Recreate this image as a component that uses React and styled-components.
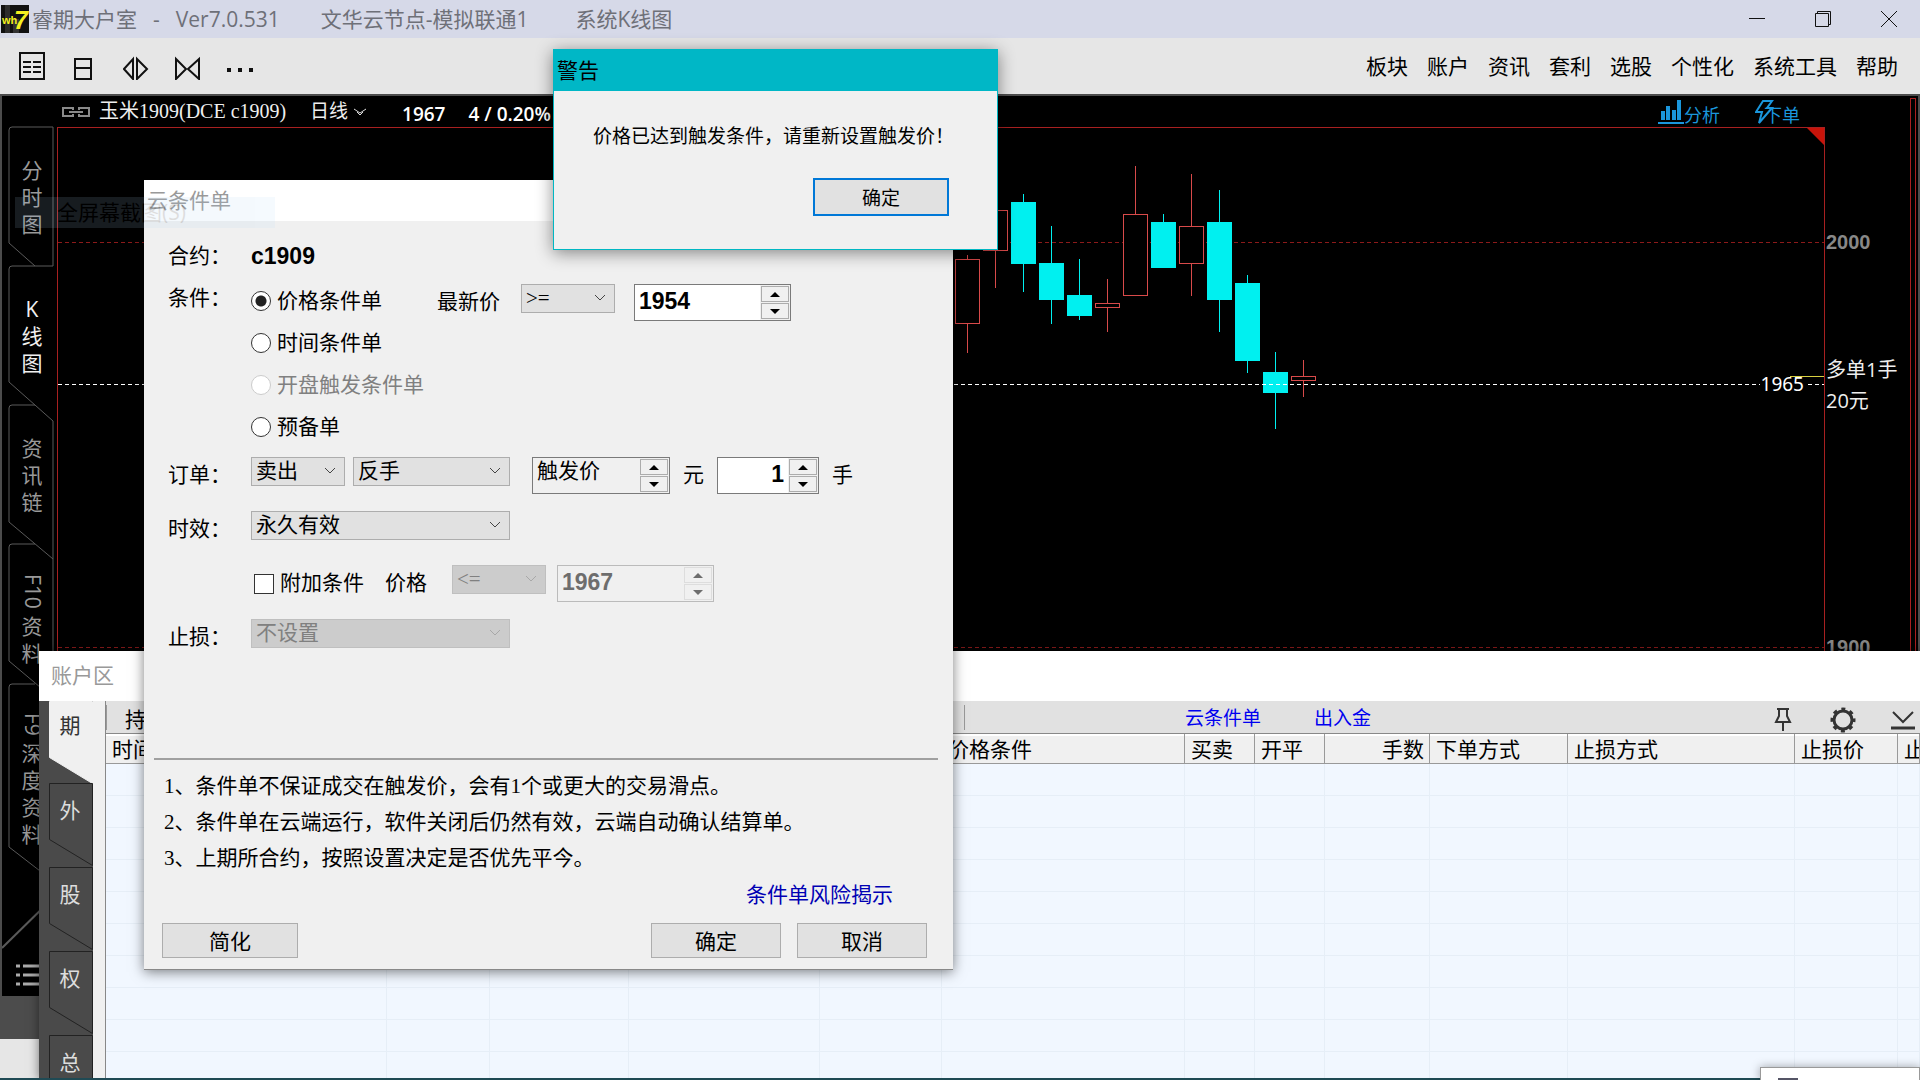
import React from 'react';
import styled, { createGlobalStyle } from 'styled-components';

const SANS = `'Open Sans', 'Noto Sans CJK SC', sans-serif`;
const SONG = `'Liberation Serif', 'Noto Sans CJK SC', serif`;
const ARIAL = `'Liberation Sans', 'Noto Sans CJK SC', sans-serif`;

const MENU = ['板块', '账户', '资讯', '套利', '选股', '个性化', '系统工具', '帮助'];

const SIDE_TABS = [
  { chars: ['分', '时', '图'] },
  { chars: ['K', '线', '图'], active: true },
  { chars: ['资', '讯', '链'] },
  { latin: 'F10', chars: ['资', '料'] },
  { latin: 'F9', chars: ['深', '度', '资', '料'] },
];

const ACCOUNT_TABS = ['期', '外', '股', '权', '总'];

const COLUMNS = [
  { width: 281, title: '时间' },
  { width: 103 },
  { width: 139 },
  { width: 191 },
  { width: 122 },
  { width: 243, title: '价格条件' },
  { width: 70, title: '买卖' },
  { width: 70, title: '开平' },
  { width: 105, title: '手数', right: true },
  { width: 138, title: '下单方式' },
  { width: 227, title: '止损方式' },
  { width: 103, title: '止损价' },
  { title: '止损' },
];

// x is the middle of the candle, y values run from the top of the plot
const CANDLES = [
  { x: 909, high: 127, top: 131, bottom: 195, low: 225, up: true },
  { x: 937, high: 70, top: 82, bottom: 122, low: 160, up: true },
  { x: 965, high: 66, top: 74, bottom: 135, low: 164 },
  { x: 993, high: 98, top: 135, bottom: 171, low: 196 },
  { x: 1021, high: 131, top: 167, bottom: 187, low: 192 },
  { x: 1049, high: 151, top: 175, bottom: 179, low: 204, up: true },
  { x: 1077, high: 38, top: 86, bottom: 167, low: 167, up: true },
  { x: 1105, high: 86, top: 94, bottom: 139, low: 139 },
  { x: 1133, high: 46, top: 98, bottom: 135, low: 168, up: true },
  { x: 1161, high: 62, top: 94, bottom: 171, low: 204 },
  { x: 1189, high: 147, top: 155, bottom: 232, low: 245 },
  { x: 1217, high: 224, top: 244, bottom: 264, low: 301 },
  { x: 1245, high: 232, top: 248, bottom: 252, low: 269, up: true },
];

function ComboBox({ label, value, width, disabled }) {
  return (
    <ComboWrap $width={width}>
      <Combo aria-label={label} disabled={disabled} defaultValue={value}>
        <option>{value}</option>
      </Combo>
      <ComboArrow viewBox="0 0 12 8" $disabled={disabled}>
        <path d="M1 1l5 5 5-5" />
      </ComboArrow>
    </ComboWrap>
  );
}

function Spinner({ label, value, width, disabled, plain, right }) {
  return (
    <SpinnerBox $width={width} $disabled={disabled} $plain={plain}>
      <SpinnerInput
        aria-label={label}
        defaultValue={value}
        disabled={disabled}
        $plain={plain}
        $right={right}
      />
      <SpinnerButtons>
        <SpinnerButton type="button" aria-label={`${label} +`} disabled={disabled}>
          <svg width="10" height="5"><path d="M0 5l5-5 5 5z" fill="currentColor" /></svg>
        </SpinnerButton>
        <SpinnerButton type="button" aria-label={`${label} -`} disabled={disabled}>
          <svg width="10" height="5"><path d="M0 0l5 5 5-5z" fill="currentColor" /></svg>
        </SpinnerButton>
      </SpinnerButtons>
    </SpinnerBox>
  );
}

function TitleBar() {
  return (
    <TitleBarBox>
      <svg width="28" height="28" viewBox="0 0 28 28">
        <rect width="28" height="28" fill="#111" />
        <rect x="4" width="5" height="28" fill="#2c2c2c" />
        <rect x="12" y="14" width="6" height="14" fill="#333" />
        <text x="1" y="19" fill="#f4f020" fontFamily="Liberation Sans" fontWeight="bold" fontSize="11">wh</text>
        <text x="13" y="24" fill="#f4f020" fontFamily="Liberation Sans" fontStyle="italic" fontWeight="bold" fontSize="25">7</text>
      </svg>
      <AppName>
        <span>睿期大户室</span>
        <span>-</span>
        <span>Ver7.0.531</span>
      </AppName>
      <span>文华云节点-模拟联通1</span>
      <ViewName>系统K线图</ViewName>
      <WindowButtons>
        <WindowButton aria-label="最小化">
          <svg width="16" height="16"><path d="M0 7.5h16" /></svg>
        </WindowButton>
        <WindowButton aria-label="还原">
          <svg width="16" height="16"><path d="M.5 2.500h13v13h-13zM2.500 2.500v-2h13v13h-2" /></svg>
        </WindowButton>
        <WindowButton aria-label="关闭">
          <svg width="16" height="16"><path d="M0 0l16 16M16 0L0 16" /></svg>
        </WindowButton>
      </WindowButtons>
    </TitleBarBox>
  );
}

function Toolbar() {
  return (
    <ToolbarBox>
      <Tools>
        <ToolButton aria-label="列表">
          <svg width="26" height="28">
            <path d="M1 1h24v26H1zM4 10h8M14 10h8M4 15h8M14 15h8M4 20h8M14 20h8" />
          </svg>
        </ToolButton>
        <ToolButton aria-label="日线">
          <svg width="26" height="28"><path d="M4 7h16v20H4zM4 16h16" /></svg>
        </ToolButton>
        <ToolButton aria-label="缩小">
          <svg width="26" height="28"><path d="M10 7v20L1 17zM14 7v20l10-10z" /></svg>
        </ToolButton>
        <ToolButton aria-label="放大">
          <svg width="26" height="28"><path d="M1 7v20l10-10zM24 7v20L13 17z" /></svg>
        </ToolButton>
        <ToolButton aria-label="更多">
          <svg width="26" height="28">
            <path d="M0 18h4M11 18h4M22 18h4" />
          </svg>
        </ToolButton>
      </Tools>
      <Menu>
        {MENU.map((item) => (
          <MenuItem key={item}>{item}</MenuItem>
        ))}
      </Menu>
    </ToolbarBox>
  );
}

function SideBar() {
  return (
    <SideBarBox>
      <SideOutline width="55" height="900">
        <path d="M33 170h18V31H10q-3 0-3 3v113l26 23H10q-3 0-3 3v113l44 39v138M33 309H10q-3 0-3 3v114l44 37v128M33 448H10q-3 0-3 3v114l44 37v300M33 588H10q-3 0-3 3v160l44 34" />
        <path d="M0 852L55 798" strokeWidth="2" />
        <path d="M14 870h4M14 879h4M14 888h4M21 870h22M21 879h22M21 888h22" strokeWidth="3" stroke="#aaa" />
      </SideOutline>
      {SIDE_TABS.map((tab, i) => (
        <SideTab key={i} $active={tab.active}>
          {tab.latin && <Sideways>{tab.latin}</Sideways>}
          {tab.chars.map((c, n) => (
            <span key={n}>{c}</span>
          ))}
        </SideTab>
      ))}
    </SideBarBox>
  );
}

function Chart() {
  return (
    <Plot>
      <svg width="100%" height="100%">
        <line x1="0" x2="100%" y1="114.5" y2="114.5" stroke="#8c1a1a" strokeDasharray="4 3" />
        <line x1="0" x2="100%" y1="519.5" y2="519.5" stroke="#8c1a1a" strokeDasharray="4 3" />
        {CANDLES.map((c) => {
          const color = c.up ? '#d84a4a' : '#00f0f0';
          return (
            <g key={c.x} stroke={color} shapeRendering="crispEdges">
              <line x1={c.x} x2={c.x} y1={c.high} y2={c.top} />
              <line x1={c.x} x2={c.x} y1={c.bottom} y2={c.low} />
              <rect
                x={c.x - 12}
                y={c.top}
                width="24"
                height={c.bottom - c.top}
                fill={c.up ? '#000' : color}
              />
            </g>
          );
        })}
        <line x1="0" x2="100%" y1="256.500" y2="256.500" stroke="#fff" strokeDasharray="4 3" />
      </svg>
      <Corner width="17" height="17"><path d="M0 0h17v17z" fill="#c8140a" /></Corner>
      <LastPrice>1965</LastPrice>
      <CostLine />
    </Plot>
  );
}

function ChartPanel() {
  return (
    <ChartColumn>
      <ChartHeader>
        <svg width="28" height="12" fill="none" stroke="#8a8a8a" strokeWidth="2">
          <path d="M11 4V2H1v8h10V8M17 4V2h10v8H17V8M7 6h14" />
        </svg>
        <Contract>玉米1909(DCE c1909)</Contract>
        <Period>
          日线
          <svg width="13" height="8" fill="none" stroke="#ddd"><path d="M0 1l6 4 6-4M3 4l3 3 3-3" /></svg>
        </Period>
        <Quote>1967</Quote>
        <Quote>4 / 0.20%</Quote>
        <Actions>
          <ActionButton>
            <svg width="26" height="24" fill="currentColor">
              <path d="M3 11h4v9H3zM8 6h4v14H8zM14 10h4v10h-4zM19 0h4v20h-4zM0 22h26v2H0z" />
            </svg>
            <span>分析</span>
          </ActionButton>
          <ActionButton $overlap>
            <svg width="19" height="24" fill="none" stroke="currentColor" strokeWidth="2">
              <path d="M8 1h9l-5 7h5L4 23l3-11H1z" />
            </svg>
            <span>下单</span>
          </ActionButton>
        </Actions>
      </ChartHeader>
      <ChartRow>
        <Chart />
        <Axis>
          <AxisLabel $top={102}>2000</AxisLabel>
          <AxisLabel $top={507}>1900</AxisLabel>
          <Position>多单1手<br />20元</Position>
        </Axis>
      </ChartRow>
    </ChartColumn>
  );
}

function AccountWindow() {
  return (
    <AccountBox>
      <WindowTitle $tall>账户区</WindowTitle>
      <AccountBody>
        <AccountRail>
          {ACCOUNT_TABS.map((name, i) => (
            <AccountTab key={name} $active={i === 0}>
              <svg width="44" height="84"><path d="M.5 .5h43v82l-43-26z" /></svg>
              <span>{name}</span>
            </AccountTab>
          ))}
        </AccountRail>
        <AccountMain>
          <AccountBar>
            <AccountViews>
              <AccountView>持仓</AccountView>
            </AccountViews>
            <AccountLinks>
              <a href="#cloud">云条件单</a>
              <a href="#funds">出入金</a>
            </AccountLinks>
            <IconButtons>
              <IconButton aria-label="固定">
                <svg width="26" height="26" strokeWidth="2">
                  <path d="M7 2h12M9 2v7l-3 6h14l-3-6V2M13 15v9" />
                </svg>
              </IconButton>
              <IconButton aria-label="设置">
                <svg width="26" height="26">
                  <circle cx="13" cy="13" r="11" strokeWidth="3" strokeDasharray="4 4.640" strokeDashoffset="2" />
                  <circle cx="13" cy="13" r="9" strokeWidth="3" />
                </svg>
              </IconButton>
              <IconButton aria-label="收起">
                <svg width="26" height="26" strokeWidth="2">
                  <path d="M3 5l10 10L23 5" />
                  <path d="M1 21h24" strokeWidth="3" />
                </svg>
              </IconButton>
            </IconButtons>
          </AccountBar>
          <OrderTable>
            <colgroup>
              {COLUMNS.map((c, i) => (
                <col key={i} width={c.width} />
              ))}
            </colgroup>
            <thead>
              <tr>
                {COLUMNS.map((c, i) => (
                  <HeadCell key={i} $right={c.right}>{c.title}</HeadCell>
                ))}
              </tr>
            </thead>
            <tbody>
              {Array.from({ length: 10 }, (_, r) => (
                <tr key={r}>
                  {COLUMNS.map((c, i) => (
                    <Cell key={i} />
                  ))}
                </tr>
              ))}
            </tbody>
          </OrderTable>
        </AccountMain>
      </AccountBody>
    </AccountBox>
  );
}

function ConditionDialog() {
  return (
    <DialogBox>
      <WindowTitle>云条件单</WindowTitle>
      <DialogBody>
        <ContractRow>
          <RowLabel>合约：</RowLabel>
          <strong>c1909</strong>
        </ContractRow>
        <ConditionRow>
          <RowLabel>条件：</RowLabel>
          <Radios>
            <Choice><Radio name="kind" defaultChecked />价格条件单</Choice>
            <Choice><Radio name="kind" />时间条件单</Choice>
            <Choice $disabled><Radio name="kind" disabled />开盘触发条件单</Choice>
            <Choice><Radio name="kind" />预备单</Choice>
          </Radios>
          <PriceRule>
            <RuleName>最新价</RuleName>
            <ComboBox label="比较" value=">=" width={94} />
            <RuleSpinner><Spinner label="价格" value="1954" width={157} /></RuleSpinner>
          </PriceRule>
        </ConditionRow>
        <Rows>
          <Row>
            <RowLabel>订单：</RowLabel>
            <OrderSide>
              <ComboBox label="买卖" value="卖出" width={94} />
              <ComboBox label="开平" value="反手" width={157} />
            </OrderSide>
            <Spinner label="委托价" value="触发价" width={138} plain />
            <Unit>元</Unit>
            <Spinner label="手数" value="1" width={102} right />
            <Unit>手</Unit>
          </Row>
          <Row>
            <RowLabel>时效：</RowLabel>
            <ComboBox label="时效" value="永久有效" width={259} />
          </Row>
          <Row>
            <RowLabel />
            <ExtraChoice><Check />附加条件</ExtraChoice>
            <ExtraName>价格</ExtraName>
            <ComboBox label="附加比较" value="<=" width={94} disabled />
            <ExtraSpinner><Spinner label="附加价格" value="1967" width={157} disabled /></ExtraSpinner>
          </Row>
          <Row>
            <RowLabel>止损：</RowLabel>
            <ComboBox label="止损" value="不设置" width={259} disabled />
          </Row>
        </Rows>
        <Divider />
        <Notes>
          <li>1、条件单不保证成交在触发价，会有1个或更大的交易滑点。</li>
          <li>2、条件单在云端运行，软件关闭后仍然有效，云端自动确认结算单。</li>
          <li>3、上期所合约，按照设置决定是否优先平今。</li>
        </Notes>
        <RiskLink href="#risk">条件单风险揭示</RiskLink>
        <DialogButtons>
          <Button $width={136}>简化</Button>
          <ButtonPair>
            <Button $width={130}>确定</Button>
            <Button $width={130}>取消</Button>
          </ButtonPair>
        </DialogButtons>
      </DialogBody>
    </DialogBox>
  );
}

export default function App() {
  return (
    <Page>
      <GlobalStyle />
      <TitleBar />
      <Toolbar />
      <Workspace>
        <SideBar />
        <ChartPanel />
        <ScrollRail />
      </Workspace>
      <StatusStrip />
      <Footer />
      <AccountWindow />
      <ConditionDialog />
      <WarningBox role="alertdialog" aria-label="警告">
        <WarningTitle>警告</WarningTitle>
        <WarningText>价格已达到触发条件，请重新设置触发价！</WarningText>
        <WarningButton>确定</WarningButton>
      </WarningBox>
      <GhostMenu>全屏幕截图(S)</GhostMenu>
      <TaskBar />
      <Popup>
        <svg width="20" height="2"><rect width="20" height="2" fill="#556" /></svg>
      </Popup>
    </Page>
  );
}

const GlobalStyle = createGlobalStyle`
  * {
    box-sizing: border-box;
  }
  body {
    margin: 0;
    overflow: hidden;
    font-family: ${SANS};
    font-size: 21px;
  }
  button, input, select {
    margin: 0;
    padding: 0;
    border: 0;
    border-radius: 0;
    background: none;
    color: inherit;
    font: inherit;
  }
  a {
    text-decoration: none;
  }
  svg {
    flex-shrink: 0;
  }
`;

const Page = styled.div`
  position: relative;
  display: flex;
  flex-direction: column;
  height: 100vh;
  overflow: hidden;
  background: #e6e6e6;
`;

const TitleBarBox = styled.header`
  display: flex;
  align-items: center;
  height: 38px;
  padding: 0 23px 0 1px;
  line-height: 38px;
  background: #d6d9e8;
  color: #6e7078;
  white-space: nowrap;
`;
const AppName = styled.div`
  display: flex;
  gap: 16px;
  margin: 0 41px 0 3px;
`;
const ViewName = styled.span`
  margin-left: 47px;
`;
const WindowButtons = styled.div`
  display: flex;
  gap: 50px;
  margin-left: auto;
`;
const WindowButton = styled.button`
  display: flex;
  svg {
    fill: none;
    stroke: #111;
  }
`;

const ToolbarBox = styled.div`
  display: flex;
  align-items: center;
  justify-content: space-between;
  height: 56px;
  padding: 0 22px 0 19px;
`;
const Tools = styled.div`
  display: flex;
  gap: 26px;
`;
const ToolButton = styled.button`
  display: flex;
  svg {
    fill: none;
    stroke: #111;
    stroke-width: 2px;
  }
  &:last-child svg {
    stroke-width: 4px;
  }
`;
const Menu = styled.nav`
  display: flex;
  gap: 19px;
`;
const MenuItem = styled.button`
  line-height: 28px;
  color: #000;
`;

const Workspace = styled.main`
  display: flex;
  flex: 1;
  min-height: 0;
  overflow: hidden;
  border: 2px solid #4c4c4c;
  border-bottom: 0;
  background: #000;
`;
const SideBarBox = styled.aside`
  position: relative;
  width: 55px;
  flex-shrink: 0;
  padding: 31px 2px 0 7px;
`;
const SideOutline = styled.svg`
  position: absolute;
  top: 0;
  left: 0;
  fill: none;
  stroke: #5a5a5a;
`;
const SideTab = styled.div`
  position: relative;
  display: flex;
  flex-direction: column;
  align-items: center;
  height: 139px;
  padding-top: 30px;
  line-height: 27px;
  color: ${(p) => (p.$active ? '#f0f0f0' : '#999')};
`;
const Sideways = styled.span`
  writing-mode: vertical-rl;
  margin-bottom: 4px;
`;

const ChartColumn = styled.section`
  display: flex;
  flex: 1;
  flex-direction: column;
  min-width: 0;
`;
const ChartHeader = styled.div`
  display: flex;
  align-items: center;
  height: 31px;
  padding: 0 110px 0 5px;
  color: #eee;
  font-family: ${SONG};
  font-size: 20px;
  line-height: 31px;
  white-space: nowrap;
`;
const Contract = styled.span`
  width: 211px;
  margin-left: 9px;
`;
const Period = styled.button`
  display: flex;
  align-items: center;
  gap: 6px;
  margin-right: 12px;
  font-size: 19px;
`;
const Quote = styled.b`
  padding-top: 6px;
  margin-left: 23px;
  color: #fff;
  font-family: 'Open Sans', sans-serif;
  font-size: 19px;
  font-weight: 600;
`;
const Actions = styled.div`
  display: flex;
  gap: 35px;
  margin-left: auto;
`;
const ActionButton = styled.button`
  display: flex;
  align-items: center;
  color: #1a96dc;
  font-family: ${SANS};
  font-size: 18px;
  line-height: 24px;
  svg {
    margin-right: ${(p) => (p.$overlap ? '-10px' : '0')};
  }
  span {
    padding-top: 6px;
  }
`;
const ChartRow = styled.div`
  display: flex;
  flex: 1;
`;
const Plot = styled.div`
  position: relative;
  flex: 1;
  border: 1px solid #a82020;
  border-bottom: 0;
`;
const Corner = styled.svg`
  position: absolute;
  top: 0;
  right: 0;
`;
const LastPrice = styled.span`
  position: absolute;
  top: 244px;
  right: 19px;
  padding: 0 1px;
  background: #000;
  color: #fff;
  font-family: 'Noto Sans', sans-serif;
  font-size: 19px;
  line-height: 24px;
`;
const CostLine = styled.i`
  position: absolute;
  top: 248px;
  right: 0;
  width: 34px;
  height: 1px;
  background: #d8d040;
`;
const Axis = styled.div`
  position: relative;
  width: 85px;
`;
const AxisLabel = styled.b`
  position: absolute;
  top: ${(p) => p.$top}px;
  left: 1px;
  color: #888;
  font-family: ${ARIAL};
  font-size: 20px;
  line-height: 26px;
`;
const Position = styled.span`
  position: absolute;
  top: 227px;
  left: 1px;
  color: #eee;
  font-size: 20px;
  line-height: 31px;
  white-space: nowrap;
`;
const ScrollRail = styled.div`
  width: 6px;
  margin: 2px 2px 0 0;
  border: 1px solid #a82020;
`;
const StatusStrip = styled.div`
  height: 43px;
  background: #4c4c4c;
`;
const Footer = styled.footer`
  height: 41px;
`;

const WindowTitle = styled.h2`
  margin: 0;
  padding: ${(p) => (p.$tall ? '0 0 2px 12px' : '0 0 0 3px')};
  background: #fff;
  color: #999;
  font-size: 21px;
  font-weight: 400;
  line-height: ${(p) => (p.$tall ? '48px' : '41px')};
`;

const AccountBox = styled.section`
  position: absolute;
  top: 651px;
  right: 0;
  bottom: 0;
  left: 39px;
  display: flex;
  flex-direction: column;
  overflow: hidden;
  background: #f0f0f0;
  box-shadow: 0 0 10px rgba(0, 0, 0, 0.5);
`;
const AccountBody = styled.div`
  display: flex;
  flex: 1;
  min-height: 0;
`;
const AccountRail = styled.div`
  width: 54px;
  flex-shrink: 0;
  margin-right: 12px;
  padding-left: 10px;
  background: #4a4a4a;
`;
const AccountTab = styled.button`
  position: relative;
  display: block;
  width: 44px;
  height: ${(p) => (p.$active ? '82px' : '84px')};
  svg {
    position: absolute;
    top: 0;
    left: 0;
    fill: ${(p) => (p.$active ? '#f0f0f0' : '#4a4a4a')};
    stroke: ${(p) => (p.$active ? '#f0f0f0' : '#222')};
  }
  span {
    position: relative;
    display: block;
    height: 84px;
    padding-right: 2px;
    color: ${(p) => (p.$active ? '#333' : '#ddd')};
    line-height: ${(p) => (p.$active ? '48px' : '54px')};
  }
`;
const AccountMain = styled.div`
  flex: 1;
  min-width: 0;
  border-left: 1px solid #888;
`;
const AccountBar = styled.div`
  display: flex;
  align-items: center;
  height: 33px;
  padding-right: 4px;
  border-bottom: 1px solid #888;
  background: #e1e1e1;
`;
const AccountViews = styled.div`
  width: 859px;
  height: 25px;
  padding-left: 18px;
  border: solid #999;
  border-width: 0 1px;
`;
const AccountView = styled.button`
  line-height: 26px;
`;
const AccountLinks = styled.div`
  display: flex;
  gap: 53px;
  margin-left: 220px;
  padding-top: 2px;
  font-size: 19px;
  line-height: 30px;
  a {
    color: #0000f0;
  }
`;
const IconButtons = styled.div`
  display: flex;
  gap: 34px;
  margin-left: auto;
`;
const IconButton = styled.button`
  display: flex;
  padding-top: 5px;
  svg {
    fill: none;
    stroke: #333;
  }
`;
const OrderTable = styled.table`
  width: 100%;
  table-layout: fixed;
  border-collapse: separate;
  border-spacing: 0;
  background: #f1f7ff;
`;
const HeadCell = styled.th`
  height: 30px;
  padding: 1px 5px 0 6px;
  overflow: hidden;
  border-right: 1px solid #999;
  border-bottom: 1px solid #999;
  background: #f0f0f0;
  box-shadow: inset 0 2px #fff;
  font-weight: 400;
  line-height: 28px;
  text-align: ${(p) => (p.$right ? 'right' : 'left')};
  white-space: nowrap;
`;
const Cell = styled.td`
  height: 32px;
  padding: 0;
  border: solid #e6eef7;
  border-width: 0 1px 1px 0;
`;

const DialogBox = styled.section`
  position: absolute;
  top: 180px;
  left: 144px;
  width: 809px;
  border-bottom: 1px solid #888;
  background: #f0f0f0;
  box-shadow: 0 2px 12px rgba(0, 0, 0, 0.5);
`;
const DialogBody = styled.form`
  padding: 12px 26px 11px 18px;
  font-family: ${SONG};
  line-height: 37px;
  strong {
    font-family: ${ARIAL};
    font-size: 23px;
  }
`;
const RowLabel = styled.span`
  width: 83px;
  flex-shrink: 0;
`;
const ContractRow = styled.div`
  display: flex;
  align-items: center;
  height: 47px;
  padding-left: 6px;
`;
const ConditionRow = styled.div`
  display: flex;
  padding-left: 6px;
`;
const Radios = styled.div`
  width: 186px;
`;
const Choice = styled.label`
  display: flex;
  align-items: center;
  gap: 6px;
  height: 42px;
  color: ${(p) => (p.$disabled ? '#808080' : '#000')};
  white-space: nowrap;
`;
const Radio = styled.input.attrs({ type: 'radio' })`
  appearance: none;
  width: 20px;
  height: 20px;
  border: 1px solid #333;
  border-radius: 50%;
  background: #fff;
  &:checked {
    background: radial-gradient(circle, #222 5px, #fff 6px);
  }
  &:disabled {
    border-color: #ccc;
  }
`;
const PriceRule = styled.div`
  display: flex;
  align-items: flex-start;
  padding-top: 4px;
`;
const RuleName = styled.span`
  width: 84px;
`;
const RuleSpinner = styled.div`
  margin-left: 19px;
`;
const Rows = styled.div`
  display: flex;
  flex-direction: column;
  gap: 17px;
  margin-top: 9px;
  padding-left: 6px;
`;
const Row = styled.div`
  display: flex;
  align-items: flex-start;
  height: 37px;
`;
const OrderSide = styled.div`
  display: flex;
  gap: 8px;
  margin-right: 22px;
`;
const Unit = styled.span`
  margin: 0 13px;
`;
const ExtraChoice = styled.label`
  display: flex;
  align-items: center;
  gap: 6px;
  width: 134px;
  padding-left: 3px;
`;
const Check = styled.input.attrs({ type: 'checkbox' })`
  appearance: none;
  width: 20px;
  height: 20px;
  border: 1px solid #333;
  background: #fff;
`;
const ExtraName = styled.span`
  width: 67px;
`;
const ExtraSpinner = styled.div`
  margin-left: 11px;
`;

const ComboWrap = styled.div`
  position: relative;
  width: ${(p) => p.$width}px;
  height: 29px;
`;
const Combo = styled.select`
  appearance: none;
  display: block;
  width: 100%;
  height: 29px;
  padding: 0 4px;
  border: 1px solid #adadad;
  background: #e1e1e1;
  line-height: 27px;
  &:disabled {
    border-color: #bfbfbf;
    background: #ccc;
    color: #808080;
    opacity: 1;
  }
`;
const ComboArrow = styled.svg`
  position: absolute;
  top: 10px;
  right: 9px;
  width: 12px;
  height: 8px;
  fill: none;
  stroke: ${(p) => (p.$disabled ? '#a8a8a8' : '#444')};
  pointer-events: none;
`;
const SpinnerBox = styled.div`
  display: flex;
  width: ${(p) => p.$width}px;
  height: 37px;
  border: 1px solid ${(p) => (p.$disabled ? '#bbb' : '#7a7a7a')};
  background: ${(p) => (p.$disabled || p.$plain ? '#f0f0f0' : '#fff')};
`;
const SpinnerInput = styled.input`
  flex: 1;
  min-width: 0;
  height: ${(p) => (p.$plain ? '26px' : '33px')};
  padding: 0 4px;
  color: #000;
  font-family: ${(p) => (p.$plain ? SONG : ARIAL)};
  font-size: ${(p) => (p.$plain ? '21px' : '23px')};
  font-weight: ${(p) => (p.$plain ? '400' : '700')};
  text-align: ${(p) => (p.$right ? 'right' : 'left')};
  &:disabled {
    color: #6d6d6d;
  }
`;
const SpinnerButtons = styled.div`
  display: grid;
  gap: 1px;
  width: 30px;
  padding: 1px;
  background: #f0f0f0;
`;
const SpinnerButton = styled.button`
  display: flex;
  align-items: center;
  justify-content: center;
  border: 1px solid #acacac;
  color: #000;
  &:disabled {
    border-color: #ddd;
    color: #6d6d6d;
  }
`;

const Divider = styled.hr`
  height: 2px;
  margin: 102px -11px 8px -8px;
  border: 0;
  background: #a0a0a0;
`;
const Notes = styled.ul`
  margin: 0;
  padding: 0 0 0 2px;
  line-height: 36px;
  list-style: none;
`;
const RiskLink = styled.a`
  display: block;
  width: max-content;
  margin: 1px 34px 0 auto;
  color: #0000b4;
`;
const DialogButtons = styled.div`
  display: flex;
  justify-content: space-between;
  margin-top: 9px;
`;
const ButtonPair = styled.div`
  display: flex;
  gap: 16px;
`;
const Button = styled.button.attrs({ type: 'button' })`
  width: ${(p) => p.$width}px;
  height: 35px;
  border: 1px solid #adadad;
  background: #e1e1e1;
`;

const WarningBox = styled.section`
  position: absolute;
  top: 49px;
  left: 553px;
  display: flex;
  flex-direction: column;
  width: 445px;
  padding-bottom: 33px;
  border: 1px solid #00b7c3;
  background: #f0f0f0;
  box-shadow: 0 3px 16px rgba(0, 0, 0, 0.45);
  font-size: 19px;
`;
const WarningTitle = styled.h2`
  margin: 0;
  padding-left: 3px;
  background: #00b7c6;
  font-size: 21px;
  font-weight: 400;
  line-height: 41px;
`;
const WarningText = styled.p`
  margin: 28px 0 24px 39px;
  line-height: 35px;
  white-space: nowrap;
`;
const WarningButton = styled(Button)`
  align-self: flex-end;
  width: 136px;
  height: 38px;
  margin-right: 48px;
  border: 2px solid #0078d7;
`;

const GhostMenu = styled.div`
  position: absolute;
  top: 197px;
  left: 15px;
  width: 260px;
  padding-left: 42px;
  background: #b0d5f5;
  opacity: 0.13;
  line-height: 31px;
`;
const TaskBar = styled.div`
  position: absolute;
  right: 0;
  bottom: 0;
  left: 0;
  height: 2px;
  background: #1f4a54;
`;
const Popup = styled.div`
  position: absolute;
  right: 0;
  bottom: 0;
  display: flex;
  align-items: flex-end;
  width: 160px;
  height: 13px;
  padding-left: 17px;
  border: 1px solid #999;
  border-bottom: 0;
  background: #fff;
  box-shadow: 0 0 10px rgba(0, 0, 0, 0.35);
`;
